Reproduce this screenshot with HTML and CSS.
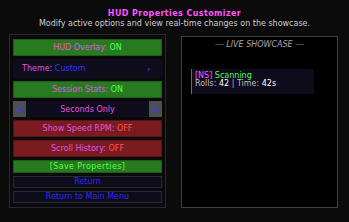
FILE: index.html
```html
<!DOCTYPE html>
<html lang="en">
<head>
  <meta charset="UTF-8" />
  <meta name="viewport" content="width=device-width, initial-scale=1.0" />
  <title>HUD Properties Customizer</title>
  <link rel="stylesheet" href="styles.css">
</head>
<body>
  <div class="header">
    <h1>HUD Properties Customizer</h1>
    <p class="sub">Modify active options and view real-time changes on the showcase.</p>
  </div>

  <div class="main">
    <div class="options">
      <div class="btn on"><span class="label">HUD Overlay:</span> <span class="val-on">ON</span></div>
      <div class="select">
        <span><span class="label">Theme:</span> <span class="blue">Custom</span></span>
        <span class="caret">&#9662;</span>
      </div>
      <div class="btn on"><span class="label">Session Stats:</span> <span class="val-on">ON</span></div>
      <div class="cycle">
        <span class="arrow">&lt;</span>
        <span class="label">Seconds Only</span>
        <span class="arrow">&gt;</span>
      </div>
      <div class="btn off"><span class="label">Show Speed RPM:</span> <span class="val-off">OFF</span></div>
      <div class="btn off"><span class="label">Scroll History:</span> <span class="val-off">OFF</span></div>
      <div class="btn save">[Save Properties]</div>
      <div class="btn plain">Return</div>
      <div class="btn plain">Return to Main Menu</div>
    </div>

    <div class="showcase">
      <div class="show-title">--- LIVE SHOWCASE ---</div>
      <div class="hud">
        <div><span class="tag">[NS]</span> <span class="green">Scanning</span></div>
        <div><span class="grey">Rolls:</span> 42 <span class="grey">|</span> <span class="grey">Time:</span> 42s</div>
      </div>
    </div>
  </div>
</body>
</html>
```

FILE: styles.css
```css
body {
  margin: 0;
  background: #0b0b0b;
  color: #ffffff;
  font-family: "DejaVu Sans", sans-serif;
  font-size: 8px;
  width: 349px;
  height: 222px;
  overflow: hidden;
}

.header {
  text-align: center;
  padding-top: 9px;
  height: 25px;
}

h1 {
  margin: 0;
  font-size: 8px;
  line-height: 10px;
  font-weight: bold;
  color: #ff55ff;
  letter-spacing: 0.4px;
}

.sub {
  margin: 0;
  line-height: 10px;
  color: #cfcfcf;
  font-size: 8px;
}

.main {
  display: flex;
  gap: 15px;
  padding-left: 9px;
}

.options {
  width: 149px;
  border: 1px solid #2a2633;
  padding: 4px 3px 4px 3px;
  display: flex;
  flex-direction: column;
  gap: 3px;
  background: #0a0a0a;
}

.btn {
  height: 17px;
  line-height: 15px;
  box-sizing: border-box;
  text-align: center;
  white-space: nowrap;
}

.label {
  color: #e055e0;
}

.on {
  background: #277a1d;
  border: 1px solid #1c5c14;
}

.off {
  background: #7a1c1f;
  border: 1px solid #5a1214;
}

.val-on {
  color: #55ff55;
}

.val-off {
  color: #ff5555;
}

.select {
  height: 19px;
  background: #0f0c1c;
  display: flex;
  align-items: center;
  justify-content: space-between;
  padding: 0 12px 0 9px;
}

.blue {
  color: #3333ff;
}

.caret {
  color: #3333ff;
  font-size: 5px;
}

.cycle {
  height: 16px;
  background: #0f0c1c;
  display: flex;
  align-items: stretch;
  justify-content: space-between;
}

.cycle .label {
  align-self: center;
}

.arrow {
  width: 13px;
  background: #4e4e55;
  color: #3a3aff;
  display: flex;
  align-items: center;
  justify-content: center;
  font-size: 8px;
  font-weight: bold;
}

.save {
  height: 13px;
  line-height: 11px;
  background: #277a1d;
  border: 1px solid #1c5c14;
  color: #55ff55;
  letter-spacing: 0.4px;
}

.plain {
  height: 12px;
  line-height: 10px;
  background: #0e0c18;
  border: 1px solid #2a2836;
  color: #2a2aff;
}

.showcase {
  margin-top: 2px;
  width: 157px;
  height: 172px;
  box-sizing: border-box;
  border: 1px solid #3f3f3f;
  background: #000000;
}

.show-title {
  text-align: center;
  font-style: italic;
  color: #a8a8a8;
  line-height: 10px;
  margin-top: 3px;
}

.hud {
  margin: 19px 0 0 9px;
  width: 123px;
  height: 25px;
  box-sizing: border-box;
  background: #0e0b1a;
  border-left: 1px solid #a23ad0;
  padding: 3px 0 0 3px;
  line-height: 8px;
  color: #ffffff;
}

.tag {
  color: #ff55ff;
}

.green {
  color: #55ff55;
}

.grey {
  color: #bdbdbd;
}
```
